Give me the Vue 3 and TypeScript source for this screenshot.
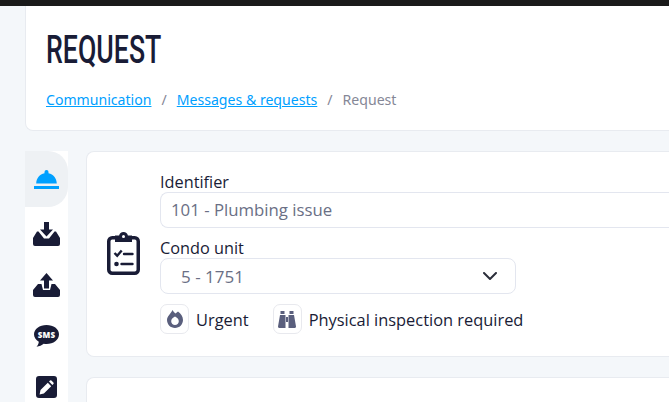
<script setup lang="ts">
</script>

<template>
  <div class="page">
    <div class="topbar"></div>
    <div class="content">
      <header class="head">
        <h1>REQUEST</h1>
        <nav class="crumbs">
          <a href="#">Communication</a>
          <span class="sep">/</span>
          <a href="#">Messages &amp; requests</a>
          <span class="sep">/</span>
          <span class="cur">Request</span>
        </nav>
      </header>
      <div class="body">
        <aside class="side">
          <div class="tab active">
            <svg viewBox="0 0 25 19" width="25" height="19"><path fill="#00a0ff" d="M12.500 0a2 2 0 0 0-2 2v1.200C5.600 4.100 2.400 8.200 2.200 13.500h20.600C22.600 8.200 19.400 4.100 14.500 3.200V2a2 2 0 0 0-2-2zM0 16h25v3H0z"/></svg>
          </div>
          <div class="tab">
            <svg viewBox="0 0 27 24" width="27" height="24"><path fill="#191c36" d="M4 9.500h1.500l5.500 7h5l5.500-7H23l4 6.500v6a2 2 0 0 1-2 2H2a2 2 0 0 1-2-2v-6z"/><path fill="#191c36" d="M11 0h5v7.500h4l-6.500 7-6.500-7h4z"/></svg>
          </div>
          <div class="tab">
            <svg viewBox="0 0 27 24" width="27" height="24"><path fill="#191c36" d="M5 11h3.500l1.500 6h7l1.500-6H22l5 6v5a2 2 0 0 1-2 2H2a2 2 0 0 1-2-2v-5z"/><path fill="#191c36" d="M13.500 0L20 7.500h-4v8h-5v-8H7z"/></svg>
          </div>
          <div class="tab">
            <svg viewBox="0 0 25 22" width="25" height="22"><path fill="#191c36" d="M12.500 0C5.600 0 0 4.200 0 9.300c0 3 1.900 5.700 4.800 7.400-.2 2-1 3.600-2.300 5.100 2.900-.4 5.400-1.500 7.200-3 .9.200 1.800.300 2.800.300 6.900 0 12.500-4.200 12.500-9.800S19.400 0 12.500 0z"/><text x="12.500" y="12.500" text-anchor="middle" class="sms">SMS</text></svg>
          </div>
          <div class="tab">
            <svg viewBox="0 0 21 22" width="21" height="22"><path fill="#191c36" fill-rule="evenodd" d="M3 0h15a3 3 0 0 1 3 3v16a3 3 0 0 1-3 3H3a3 3 0 0 1-3-3V3a3 3 0 0 1 3-3zM11.800 6.800L4.500 14.100l-.9 4.300 4.300-.9 7.300-7.300zM13 5.600l3.400 3.400 1-1a1 1 0 0 0 0-1.400L15.400 4.600a1 1 0 0 0-1.400 0z"/></svg>
          </div>
        </aside>
        <main class="main">
          <section class="card">
            <div class="clip">
              <svg viewBox="0 0 33 43" width="33" height="43"><rect x="1.750" y="5.750" width="29.500" height="35.500" rx="3.500" fill="#fff" stroke="#191c36" stroke-width="3.500"/><path fill="#191c36" d="M16.500 0a4.500 4.500 0 0 1 4.400 3.500H25v6.500H8V3.500h4.100A4.500 4.500 0 0 1 16.500 0z"/><circle cx="16.500" cy="4.500" r="1.500" fill="#fff"/><path d="M7.500 21l2.700 2.700 4.500-5.200" fill="none" stroke="#191c36" stroke-width="2.400"/><path d="M17 22h8.500M14.500 32h11" stroke="#191c36" stroke-width="2.400" stroke-linecap="round"/><circle cx="9.500" cy="32" r="2.300" fill="#191c36"/></svg>
            </div>
            <div class="fields">
              <label class="lbl">Identifier</label>
              <div class="input">101 - Plumbing issue</div>
              <label class="lbl second">Condo unit</label>
              <div class="select">
                <span>5 - 1751</span>
                <svg viewBox="0 0 14 9" width="14" height="9"><path d="M1 1l6 6 6-6" fill="none" stroke="#2b2e3a" stroke-width="2" stroke-linecap="round" stroke-linejoin="round"/></svg>
              </div>
              <div class="flags">
                <div class="flag">
                  <span class="ico">
                    <svg viewBox="0 0 16 18" width="16" height="18"><path fill="#5a5f7d" fill-rule="evenodd" d="M5.500 0c.8 1.600 1.800 2.500 3 3.500L11 1.500c2.900 2 5 5.300 5 8.500 0 4.400-3.500 8-8 8s-8-3.600-8-8C0 6.500 3.500 4 5.500 0zM8 6.500C5.700 7.800 4.200 9.300 4.200 11.200c0 2.100 1.700 3.800 3.800 3.800s3.800-1.700 3.800-3.800c0-1.900-1.500-3.400-3.800-4.700z"/></svg>
                  </span>
                  <span>Urgent</span>
                </div>
                <div class="flag">
                  <span class="ico">
                    <svg viewBox="0 0 18 17" width="18" height="17"><path fill="#5a5f7d" d="M2.500 0h4v3h-4zM11.500 0h4v3h-4zM2 4h5.500v13H1.500C.5 17 0 16.400 0 15.500zM10.500 4H16l2 11.500c0 .9-.5 1.500-1.500 1.500h-6zM8 6h2v5H8z"/></svg>
                  </span>
                  <span>Physical inspection required</span>
                </div>
              </div>
            </div>
          </section>
          <section class="card next"></section>
        </main>
      </div>
    </div>
  </div>
</template>

<style>
html, body { margin: 0; overflow: hidden; background: #f4f7fa; }
</style>

<style scoped>
.page { width: 669px; height: 402px; overflow: hidden; background: #f4f7fa; font-family: "Open Sans", "Noto Sans", sans-serif; color: #191c36; }
.topbar { height: 6px; background: #1a1a1a; }
.content { padding-left: 25px; }
.head { height: 125px; box-sizing: border-box; background: #fff; border: 1px solid #e8ebf0; border-width: 0 0 1px 1px; border-bottom-left-radius: 8px; padding: 22px 0 0 20px; }
h1 { margin: 0; width: max-content; font: 500 39px/44px Roboto, sans-serif; color: #191c36; transform: scaleX(.685); transform-origin: left; }
.crumbs { margin-top: 17px; display: flex; font: 14.100px/22px "Noto Sans", sans-serif; color: #858796; }
.crumbs a { color: #00a0ff; }
.sep { margin: 0 10px; }
.body { display: flex; margin-top: 20px; }
.side { width: 43px; background: #fff; flex: none; height: 260px; }
.tab { height: 51px; display: flex; align-items: center; justify-content: center; }
.tab.active { height: 56px; margin-bottom: 1.500px; background: #eef1f4; border-radius: 0 20px 20px 0; }
.sms { font: 800 8px "Open Sans", sans-serif; fill: #fff; letter-spacing: .2px; }
.main { margin-left: 18px; flex: 1; }
.card { height: 206px; box-sizing: border-box; background: #fff; border: 1px solid #e8ebf0; border-right: 0; border-radius: 8px 0 0 8px; display: flex; }
.next { margin-top: 20px; height: 60px; }
.clip { width: 73px; flex: none; padding: 80px 0 0 20px; box-sizing: border-box; }
.fields { flex: 1; padding-top: 19px; min-width: 0; }
.lbl { display: block; font: 16.300px/22px "Open Sans", sans-serif; color: #191c36; height: 21px; }
.second { margin-top: 9px; }
.input { height: 36px; box-sizing: border-box; border: 1px solid #e3e6ef; border-right: 0; border-radius: 8px 0 0 8px; padding: 0 0 0 10px; font: 16.800px/34px "Open Sans", sans-serif; color: #6a6f85; }
.select { width: 356px; height: 36px; box-sizing: border-box; border: 1px solid #e3e6ef; border-radius: 8px; padding: 0 18px 0 20px; display: flex; align-items: center; justify-content: space-between; font-size: 17px; color: #6a6f85; }
.flags { display: flex; gap: 24px; margin-top: 10px; font-size: 16.400px; }
.flag { display: flex; align-items: center; gap: 7px; }
.ico { width: 29px; height: 30px; box-sizing: border-box; border: 1px solid #e8e9ee; border-radius: 7px; display: flex; align-items: center; justify-content: center; }
</style>
